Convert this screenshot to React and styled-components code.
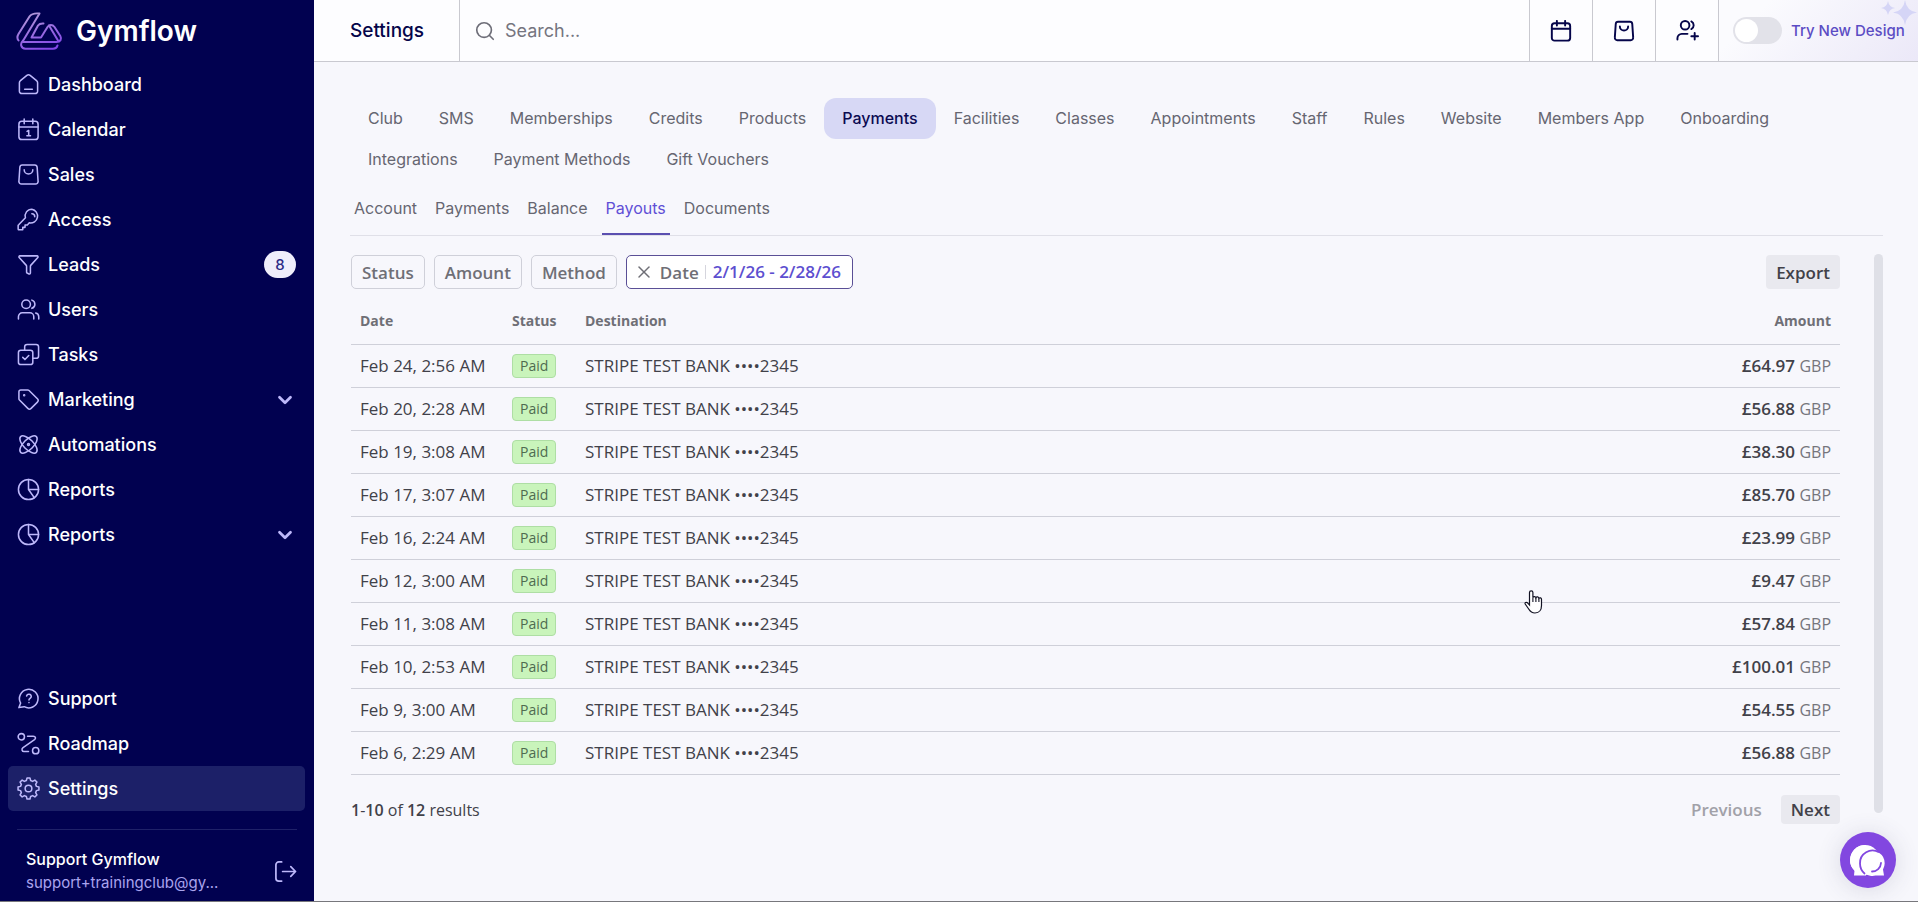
import React, { useState } from 'react';
import styled, { createGlobalStyle } from 'styled-components';
import {
  Search,
  X,
  ChevronDown,
  Funnel,
  Tag,
  Atom,
} from 'lucide-react';

const GlobalStyle = createGlobalStyle`
  * {
    box-sizing: border-box;
  }

  body {
    margin: 0;
    font-family: Inter, "Liberation Sans", sans-serif;
    background: #f7f7fc;
  }

  button, input {
    font: inherit;
    color: inherit;
  }

  button {
    cursor: pointer;
  }
`;

const Page = styled.div`
  display: flex;
  min-height: 100vh;
  border-bottom: 1px solid #77777c;
`;

const Sidebar = styled.aside`
  width: 314px;
  flex-shrink: 0;
  display: flex;
  flex-direction: column;
  background: #010150;
  color: #ffffff;
`;

const Brand = styled.a`
  height: 62px;
  padding-left: 16px;
  display: flex;
  align-items: center;
  gap: 13px;
  color: inherit;
  text-decoration: none;
  font-size: 28px;
  font-weight: 600;
`;

const Nav = styled.nav`
  padding: 0 9px 0 8px;
  display: flex;
  flex-direction: column;
  ${props => props.$bottom && 'margin-top: auto;'}
`;

const NavLink = styled.a`
  height: 45px;
  padding: 0 9px;
  display: flex;
  align-items: center;
  gap: 8px;
  border-radius: 5px;
  background: ${props => (props.$active ? '#1c2068' : 'transparent')};
  color: #ffffff;
  font-size: 18px;
  font-weight: 500;
  text-decoration: none;

  svg {
    flex-shrink: 0;
    color: #bdb8fa;
  }

  span {
    flex: 1;
  }
`;

const CountBadge = styled.b`
  width: 32px;
  height: 27px;
  border-radius: 14px;
  background: #efeefb;
  color: #2b2a86;
  font-size: 15px;
  font-weight: 500;
  line-height: 27px;
  text-align: center;
`;

const Account = styled.div`
  margin: 18px 17px 0;
  padding: 18px 0 7px 9px;
  border-top: 1px solid #1f2169;
  display: flex;
  align-items: center;
  justify-content: space-between;
`;

const AccountText = styled.div`
  min-width: 0;
  line-height: 23px;
  white-space: nowrap;

  strong,
  span {
    display: block;
  }

  strong {
    font-size: 16px;
    font-weight: 500;
  }

  span {
    color: #aaa4ee;
    font-size: 15px;
  }
`;

const IconButton = styled.button`
  padding: 0;
  border: 0;
  background: none;
  color: #bdb8fa;
  display: flex;
`;

const Main = styled.main`
  flex: 1;
  min-width: 0;
`;

const TopBar = styled.header`
  height: 62px;
  display: flex;
  border-bottom: 1px solid #c9c9d0;
  background: #fdfdff;
`;

const PageTitle = styled.h1`
  width: 146px;
  margin: 0;
  padding-left: 36px;
  display: flex;
  align-items: center;
  border-right: 1px solid #c9c9d0;
  color: #05054a;
  font-size: 19px;
  font-weight: 500;
`;

const SearchBox = styled.label`
  flex: 1;
  padding-left: 14px;
  display: flex;
  align-items: center;
  gap: 7px;
  color: #6d6d78;

  input {
    flex: 1;
    border: 0;
    outline: 0;
    background: none;
    font-size: 18px;
  }

  input::placeholder {
    color: #75757f;
    opacity: 1;
  }
`;

const TopAction = styled.button`
  width: 63px;
  padding: 0;
  border: 0;
  border-left: 1px solid #c9c9d0;
  background: none;
  color: #05054a;
  display: flex;
  align-items: center;
  justify-content: center;
`;

const NewDesign = styled.label`
  position: relative;
  width: 200px;
  padding-left: 14px;
  display: flex;
  align-items: center;
  gap: 9px;
  border-left: 1px solid #c9c9d0;
  background: linear-gradient(135deg, #fbfbfe 20%, #ebe8f8);
  color: #5b4cc4;
  font-size: 15px;
  font-weight: 500;
  white-space: nowrap;
`;

const Toggle = styled.input`
  appearance: none;
  width: 49px;
  height: 27px;
  margin: 0;
  flex-shrink: 0;
  border-radius: 14px;
  background: #e2e2e9;

  &::before {
    content: '';
    display: block;
    width: 23px;
    height: 23px;
    margin: 2px;
    border-radius: 50%;
    background: #ffffff;
  }

  &:checked::before {
    margin-left: 24px;
  }
`;

const Sparkles = styled.svg`
  position: absolute;
  top: 0;
  right: 0;
`;

const Content = styled.div`
  padding: 36px 35px 0 36px;
`;

const Tabs = styled.nav`
  display: flex;
  flex-wrap: wrap;
`;

const Tab = styled.a`
  height: 41px;
  padding: 0 18px;
  border-radius: 12px;
  background: ${props => (props.$active ? '#d7d8f5' : 'transparent')};
  color: ${props => (props.$active ? '#0b0b52' : '#666671')};
  font-size: 16px;
  font-weight: ${props => (props.$active ? 500 : 400)};
  line-height: 41px;
  text-decoration: none;
`;

const SubTabs = styled.nav`
  margin-top: 5px;
  display: flex;
  gap: 10px;
  border-bottom: 1px solid #e0e0e8;
`;

const SubTab = styled.a`
  height: 50px;
  padding: 0 4px;
  border-bottom: 2px solid ${props => (props.$active ? '#5b4fb0' : 'transparent')};
  color: ${props => (props.$active ? '#5f4fd6' : '#666671')};
  font-size: 16px;
  font-weight: 400;
  line-height: 46px;
  text-decoration: none;
`;

const Scroller = styled.div`
  margin-top: 18px;
  display: flex;
  justify-content: space-between;
  gap: 34px;
`;

const ScrollThumb = styled.div`
  width: 9px;
  margin-bottom: 14px;
  border-radius: 5px;
  background: #dfe0e7;
`;

const Payouts = styled.section`
  flex: 1;
  padding: 1px 0 0 1px;
  color: #414149;
  font-family: "Open Sans", "Noto Sans", sans-serif;
  font-size: 17px;
`;

const Toolbar = styled.div`
  display: flex;
  gap: 9px;
`;

const FilterButton = styled.button`
  height: 34px;
  padding: 0 ${props => (props.$active ? '11px' : '10px')};
  border: 1px solid ${props => (props.$active ? '#5a4f96' : '#cfd0d9')};
  border-radius: 5px;
  background: ${props => (props.$active ? '#ffffff' : 'transparent')};
  color: #6f6f76;
  display: flex;
  align-items: center;
  gap: 6px;
  font-weight: 600;

  svg {
    margin-left: -4px;
  }

  strong {
    padding-left: 7px;
    border-left: 1px solid #d5d5dd;
    color: #5d4fd0;
    font-weight: 600;
    line-height: 14px;
  }
`;

const SolidButton = styled.button`
  height: ${props => (props.$short ? '29px' : '34px')};
  padding: 0 10px;
  border: 0;
  border-radius: 4px;
  background: ${props => (props.disabled ? 'transparent' : '#e9e9ef')};
  color: ${props => (props.disabled ? '#a1a1a8' : '#414149')};
  font-weight: 600;
  ${props => props.$end && 'margin-left: auto;'}
`;

const Table = styled.table`
  width: 100%;
  margin-top: 9px;
  border-collapse: collapse;

  th,
  td {
    height: 43px;
    padding: 0 9px;
    border-bottom: 1px solid #cfd0d9;
    text-align: left;
    white-space: nowrap;
  }

  th {
    height: 46px;
    color: #6f6f76;
    font-size: 14px;
    font-weight: 700;
  }

  th:nth-child(1) {
    width: 152px;
  }

  th:nth-child(2) {
    width: 73px;
  }

  th:last-child,
  td:last-child {
    text-align: right;
  }

  strong {
    font-weight: 600;
  }

  small {
    color: #75757c;
    font-size: 16px;
  }
`;

const PaidBadge = styled.span`
  display: inline-block;
  height: 24px;
  padding: 0 7px;
  border: 1px solid #aedea4;
  border-radius: 4px;
  background: #c9f4bb;
  color: #4f6b50;
  font-size: 14px;
  line-height: 22px;
  vertical-align: middle;
`;

const Pagination = styled.footer`
  margin-top: 18px;
  display: flex;
  align-items: center;
  justify-content: space-between;
  font-size: 16px;
  line-height: 34px;

  strong {
    font-weight: 600;
  }
`;

const Pager = styled.div`
  display: flex;
  gap: 9px;
  font-size: 17px;
  line-height: 29px;
`;

const ChatButton = styled.button`
  position: fixed;
  right: 22px;
  bottom: 14px;
  width: 56px;
  height: 56px;
  padding: 0;
  border: 0;
  border-radius: 50%;
  background: #8247e0;
  box-shadow: 0 2px 24px rgba(60, 60, 100, 0.16);
  display: flex;
  align-items: center;
  justify-content: center;
`;

const Pointer = styled.svg`
  position: fixed;
  left: 1524px;
  top: 590px;
`;

// shared wrapper for the hand-drawn 24px line icons
function LineIcon({ children, size = 23, strokeWidth = 1.6 }) {
  return (
    <svg
      width={size}
      height={size}
      viewBox="0 0 24 24"
      fill="none"
      stroke="currentColor"
      strokeWidth={strokeWidth}
      strokeLinecap="round"
      strokeLinejoin="round"
      aria-hidden="true"
    >
      {children}
    </svg>
  );
}

const HomeIcon = () => (
  <LineIcon>
    <path d="M2.500 10.200c0-.9.4-1.700 1.100-2.200l6.700-5.500c1-.8 2.400-.8 3.400 0L20.400 8c.7.5 1.100 1.300 1.100 2.200V19a2.500 2.500 0 0 1-2.500 2.500H5A2.500 2.500 0 0 1 2.500 19z" />
    <path d="M8 17h8" />
  </LineIcon>
);

const CalendarIcon = ({ day, ...rest }) => (
  <LineIcon {...rest}>
    <rect x="2" y="3.500" width="20" height="19" rx="3" />
    <path d="M7.500 1v5M16.500 1v5M2 9.500h20" />
    {day && <path d="M10.500 14l1.700-1v5.500M10.300 18.500h3.800" />}
  </LineIcon>
);

const BagIcon = (props) => (
  <LineIcon {...props}>
    <path d="M5.500 2h13a2.500 2.500 0 0 1 2.500 2.300l1 14.700a2.700 2.700 0 0 1-2.700 3H4.700A2.700 2.700 0 0 1 2 19L3 4.300A2.500 2.500 0 0 1 5.500 2z" />
    <path d="M7.500 7a4.500 4.500 0 0 0 9 0" />
  </LineIcon>
);

const KeyIcon = () => (
  <LineIcon>
    <path d="M15.500 1.200a7 7 0 0 0-6.700 9L2 17.300a1.500 1.500 0 0 0-.8 1V22a.8.8 0 0 0 .8.800H6v-2.600h2.400v-2.500h2.400l2-2.200a7.100 7.100 0 1 0 2.700-14.300z" />
    <path d="M15.500 6a3 3 0 0 1 3 3" />
  </LineIcon>
);

const UsersIcon = () => (
  <LineIcon>
    <circle cx="9.500" cy="6.500" r="4.500" />
    <path d="M1.500 22v-2.500a4 4 0 0 1 4-4h8a4 4 0 0 1 4 4V22M15.500 2.200a4.500 4.500 0 0 1 0 8.600M19.500 15.700a4 4 0 0 1 3.200 4V22" />
  </LineIcon>
);

const TasksIcon = () => (
  <LineIcon>
    <path d="M8 7.500V4a2.500 2.500 0 0 1 2.500-2.500H20A2.500 2.500 0 0 1 22.500 4v9.500A2.500 2.500 0 0 1 20 16h-3.500" />
    <rect x="1.500" y="7.500" width="15" height="15" rx="2.500" />
    <path d="M6 15l2.300 2.300 4-4.300" />
  </LineIcon>
);

const PieIcon = () => (
  <LineIcon>
    <circle cx="12" cy="12" r="10.500" />
    <path d="M12 1.500V12h10.500M12 12l6 8.500" />
  </LineIcon>
);

const SupportIcon = () => (
  <LineIcon>
    <path d="M2 21.500l1.800-4.700A9.700 9.700 0 1 1 7.500 20.500z" />
    <path d="M10 9.300a2.500 2.500 0 0 1 4.900.7c0 1.700-2.400 2-2.400 3.500M12.500 16.200v.1" />
  </LineIcon>
);

const RoadmapIcon = () => (
  <LineIcon>
    <circle cx="4.500" cy="5" r="3.300" />
    <circle cx="19.500" cy="19.500" r="3.300" />
    <path d="M11 4.500h6c2.500 0 3 2 1.300 3.500L6.300 16.300c-2 1.700-1 4 1 4H12" />
  </LineIcon>
);

// outline of an eight-tooth cog, four points per tooth
const cogPoints = Array.from({ length: 32 }, (_, i) => {
  const radius = i % 4 < 2 ? 11 : 8.6;
  const offset = [-8, 8, 15, 30][i % 4];
  const angle = ((Math.floor(i / 4) * 45 + offset) * Math.PI) / 180;
  return `${12 + radius * Math.sin(angle)},${12 - radius * Math.cos(angle)}`;
}).join(' ');

const CogIcon = () => (
  <LineIcon>
    <polygon points={cogPoints} />
    <circle cx="12" cy="12" r="3.500" />
  </LineIcon>
);

const UserPlusIcon = () => (
  <LineIcon strokeWidth={2}>
    <circle cx="9.500" cy="6.500" r="4.500" />
    <path d="M1.500 21.500v-1.500a4.500 4.500 0 0 1 4.500-4.500h6M16 2.500a4.500 4.500 0 0 1 0 8M19.500 14.500v7M16 18h7" />
  </LineIcon>
);

const LogoutIcon = () => (
  <LineIcon strokeWidth={1.8}>
    <path d="M8 2H5a3 3 0 0 0-3 3v14a3 3 0 0 0 3 3h3M9 12h13M17.500 7l5 5-5 5" />
  </LineIcon>
);

function GymflowLogo() {
  return (
    <svg width="47" height="39" viewBox="0 0 47 39" fill="none" aria-hidden="true">
      <defs>
        <linearGradient id="logo" x1="14" y1="0" x2="28" y2="38" gradientUnits="userSpaceOnUse">
          <stop stopColor="#b39ad8" />
          <stop offset="1" stopColor="#8448e8" />
        </linearGradient>
      </defs>
      <g stroke="url(#logo)" strokeWidth="2" strokeLinecap="round" strokeLinejoin="round">
        <path d="M2.500 28.500C1 26.500 1 24.500 2.500 22L13.500 4.500c2-3 5-3.500 10-3L7.500 28C5.500 30 4.700 31.500 5.200 33.500c.6 2.300 2 3.200 4.300 3.200H37c2.500 0 4-1 4.500-3.200" />
        <path d="M7 30h33.500c4 0 5.500-3 3.800-6L38.500 15c-2-2.600-5.200-2.600-7 0l-6.500 10.500h-9.500L22 13.500c1.200-1.700 2.500-2.200 5.500-2" />
        <path d="M33 13.500L42 28.500" />
      </g>
    </svg>
  );
}

const mainLinks = [
  { label: 'Dashboard', icon: <HomeIcon /> },
  { label: 'Calendar', icon: <CalendarIcon day /> },
  { label: 'Sales', icon: <BagIcon /> },
  { label: 'Access', icon: <KeyIcon /> },
  { label: 'Leads', icon: <Funnel size={23} strokeWidth={1.6} />, count: 8 },
  { label: 'Users', icon: <UsersIcon /> },
  { label: 'Tasks', icon: <TasksIcon /> },
  { label: 'Marketing', icon: <Tag size={23} strokeWidth={1.6} />, expandable: true },
  { label: 'Automations', icon: <Atom size={23} strokeWidth={1.6} /> },
  { label: 'Reports', icon: <PieIcon /> },
  { label: 'Reports', icon: <PieIcon />, expandable: true },
];

const bottomLinks = [
  { label: 'Support', icon: <SupportIcon /> },
  { label: 'Roadmap', icon: <RoadmapIcon /> },
  { label: 'Settings', icon: <CogIcon />, active: true },
];

const tabs = [
  'Club', 'SMS', 'Memberships', 'Credits', 'Products', 'Payments', 'Facilities',
  'Classes', 'Appointments', 'Staff', 'Rules', 'Website', 'Members App',
  'Onboarding', 'Integrations', 'Payment Methods', 'Gift Vouchers',
];

const subTabs = ['Account', 'Payments', 'Balance', 'Payouts', 'Documents'];

const payouts = [
  { date: 'Feb 24, 2:56 AM', amount: '£64.97' },
  { date: 'Feb 20, 2:28 AM', amount: '£56.88' },
  { date: 'Feb 19, 3:08 AM', amount: '£38.30' },
  { date: 'Feb 17, 3:07 AM', amount: '£85.70' },
  { date: 'Feb 16, 2:24 AM', amount: '£23.99' },
  { date: 'Feb 12, 3:00 AM', amount: '£9.47' },
  { date: 'Feb 11, 3:08 AM', amount: '£57.84' },
  { date: 'Feb 10, 2:53 AM', amount: '£100.01' },
  { date: 'Feb 9, 3:00 AM', amount: '£54.55' },
  { date: 'Feb 6, 2:29 AM', amount: '£56.88' },
];

function NavItem({ label, icon, count, expandable, active }) {
  return (
    <NavLink href="#" $active={active}>
      {icon}
      <span>{label}</span>
      {count && <CountBadge>{count}</CountBadge>}
      {expandable && <ChevronDown size={22} strokeWidth={3} />}
    </NavLink>
  );
}

function PayoutsTable() {
  return (
    <Table>
      <thead>
        <tr>
          <th>Date</th>
          <th>Status</th>
          <th>Destination</th>
          <th>Amount</th>
        </tr>
      </thead>
      <tbody>
        {payouts.map(({ date, amount }) => (
          <tr key={date}>
            <td>{date}</td>
            <td><PaidBadge>Paid</PaidBadge></td>
            <td>STRIPE TEST BANK ••••2345</td>
            <td><strong>{amount}</strong> <small>GBP</small></td>
          </tr>
        ))}
      </tbody>
    </Table>
  );
}

function App() {
  const [newDesign, setNewDesign] = useState(false);
  const [query, setQuery] = useState('');

  return (
    <Page>
      <GlobalStyle />
      <Sidebar>
        <Brand href="#">
          <GymflowLogo />
          Gymflow
        </Brand>
        <Nav>
          {mainLinks.map((link, i) => <NavItem key={i} {...link} />)}
        </Nav>
        <Nav $bottom>
          {bottomLinks.map(link => <NavItem key={link.label} {...link} />)}
        </Nav>
        <Account>
          <AccountText>
            <strong>Support Gymflow</strong>
            <span>support+trainingclub@gy...</span>
          </AccountText>
          <IconButton aria-label="Log out"><LogoutIcon /></IconButton>
        </Account>
      </Sidebar>

      <Main>
        <TopBar>
          <PageTitle>Settings</PageTitle>
          <SearchBox>
            <Search size={22} strokeWidth={1.8} />
            <input
              aria-label="Search"
              placeholder="Search..."
              value={query}
              onChange={(e) => setQuery(e.target.value)}
            />
          </SearchBox>
          <TopAction aria-label="Calendar"><CalendarIcon size={22} strokeWidth={2.1} /></TopAction>
          <TopAction aria-label="Sales"><BagIcon size={22} strokeWidth={2.1} /></TopAction>
          <TopAction aria-label="Add user"><UserPlusIcon /></TopAction>
          <NewDesign>
            <Toggle
              type="checkbox"
              checked={newDesign}
              onChange={(e) => setNewDesign(e.target.checked)}
            />
            Try New Design
            <Sparkles width="38" height="26" viewBox="0 0 38 26" fill="#d5d5f6" aria-hidden="true">
              <path d="M25 0q1.500 11 12 12.500Q26.500 14 25 25q-1.500-11-12-12.500Q23.500 11 25 0z" />
              <path d="M8 1q1 6 7 7-6 1-7 7-1-6-7-7 6-1 7-7z" />
            </Sparkles>
          </NewDesign>
        </TopBar>

        <Content>
          <Tabs>
            {tabs.map(tab => (
              <Tab key={tab} href="#" $active={tab === 'Payments'}>{tab}</Tab>
            ))}
          </Tabs>
          <SubTabs>
            {subTabs.map(tab => (
              <SubTab key={tab} href="#" $active={tab === 'Payouts'}>{tab}</SubTab>
            ))}
          </SubTabs>

          <Scroller>
            <Payouts>
              <Toolbar>
                <FilterButton>Status</FilterButton>
                <FilterButton>Amount</FilterButton>
                <FilterButton>Method</FilterButton>
                <FilterButton $active>
                  <X size={20} strokeWidth={1.8} />
                  Date
                  <strong>2/1/26 - 2/28/26</strong>
                </FilterButton>
                <SolidButton $end>Export</SolidButton>
              </Toolbar>
              <PayoutsTable />
              <Pagination>
                <div><strong>1</strong>-<strong>10</strong> of <strong>12</strong> results</div>
                <Pager>
                  <SolidButton $short disabled>Previous</SolidButton>
                  <SolidButton $short>Next</SolidButton>
                </Pager>
              </Pagination>
            </Payouts>
            <ScrollThumb />
          </Scroller>
        </Content>
      </Main>

      <ChatButton aria-label="Open chat">
        <svg width="36" height="31" viewBox="0 0 36 31" aria-hidden="true">
          <path d="M15 0a15 15 0 0 0-10.500 25.500L4 30.500h12V0z" fill="#ffffff" />
          <circle cx="15" cy="15" r="15" fill="#ffffff" />
          <path d="M22.500 5.500a12.700 12.700 0 1 0 3 25H34l-1-6a12.700 12.700 0 0 0-10.500-19z" fill="#ffffff" />
          <path d="M29 7.300A12.500 12.500 0 0 0 10 18.500c0 4.500 2 8 5 10.500" fill="none" stroke="#8247e0" strokeWidth="1.800" />
          <path d="M31 18a9 9 0 0 1-9 8.500" fill="none" stroke="#8247e0" strokeWidth="1.800" strokeLinecap="round" />
        </svg>
      </ChatButton>

      <Pointer width="20" height="25" viewBox="0 0 20 25" aria-hidden="true">
        <path
          d="M5.500 15V2.500a1.700 1.700 0 0 1 3.400 0v5a1.600 1.600 0 0 1 3 .2 1.600 1.600 0 0 1 3 .6 1.500 1.500 0 0 1 2.600 1v6.200c0 4-2 7.500-6.500 7.500-3.500 0-4.800-1.500-6.300-4L1.200 14c-.6-1.200 1-2.400 2.300-1.200z"
          fill="#ffffff"
          stroke="#111122"
          strokeWidth="1.200"
        />
        <path d="M8.900 7.500v4.500M11.900 8v4M14.900 8.500V12" stroke="#111122" strokeWidth="1.100" />
      </Pointer>
    </Page>
  );
}

export default App;
